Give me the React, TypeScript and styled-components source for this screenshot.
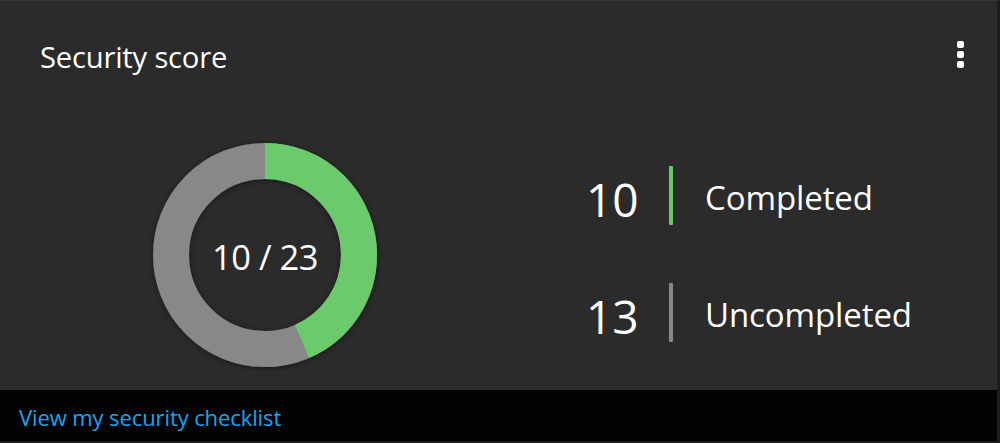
import React from 'react';
import styled, { createGlobalStyle } from 'styled-components';

const GlobalStyle = createGlobalStyle`
  html, body {
    margin: 0;
    padding: 0;
    background: #000;
  }
  body {
    font-family: "Open Sans", "Noto Sans", sans-serif;
    color: #fff;
  }
`;

const Card = styled.div`
  width: 1000px;
  height: 443px;
  display: flex;
  flex-direction: column;
  background: #2b2b2b;
  border-top: 1px solid #363636;
  border-right: 3px solid #1c1c1c;
  box-sizing: border-box;
  overflow: hidden;
`;

const Main = styled.div`
  height: 389px;
  display: flex;
  flex-direction: column;
`;

const Header = styled.div`
  display: flex;
  align-items: center;
  justify-content: space-between;
  padding: 34px 33px 0 40px;
`;

const Title = styled.h2`
  margin: 0;
  font-size: 29.2px;
  font-weight: 400;
  line-height: 44px;
  letter-spacing: -0.2px;
`;

const MenuButton = styled.button`
  display: flex;
  flex-direction: column;
  gap: 3px;
  padding: 0;
  margin-top: -5px;
  border: 0;
  background: none;
  cursor: pointer;
`;

const Dot = styled.span`
  width: 7px;
  height: 7px;
  border-radius: 2px;
  background: #fff;
`;

const Content = styled.div`
  display: flex;
  align-items: flex-start;
  padding: 61px 0 0 150px;
`;

const Donut = styled.div`
  display: grid;
  width: 230px;
  height: 230px;
  & > * {
    grid-area: 1 / 1;
  }
`;

const DonutLabel = styled.div`
  display: flex;
  align-items: center;
  justify-content: center;
  font-size: 34.5px;
  letter-spacing: -0.5px;
  padding-top: 2px;
`;

const Stats = styled.div`
  display: flex;
  flex-direction: column;
  gap: 58px;
  margin-left: 206px;
  margin-top: 26px;
`;

const StatRow = styled.div`
  display: flex;
  align-items: center;
  height: 59px;
`;

const StatValue = styled.span`
  width: 83px;
  font-size: 46px;
  line-height: 1;
  padding-top: 6px;
`;

const StatBar = styled.span<{ $color: string }>`
  width: 4px;
  height: 59px;
  border-radius: 1px;
  background: ${(p) => p.$color};
`;

const StatLabel = styled.span`
  margin-left: 32px;
  font-size: 33px;
  letter-spacing: -0.1px;
  padding-top: 4px;
`;

const Footer = styled.div`
  flex: 1;
  display: flex;
  align-items: center;
  padding: 0 0 0 19px;
  background: #030303;
  border-bottom: 2px solid #1a1a1a;
`;

const Link = styled.a`
  color: #1aa3ef;
  font-size: 22px;
  letter-spacing: -0.1px;
  text-decoration: none;
  cursor: pointer;
  padding-top: 2px;
`;

const completed = 10;
const total = 23;

const Ring = () => {
  const r = 94;
  const c = 2 * Math.PI * r;
  const frac = completed / total;
  return (
    <svg width="230" height="230" viewBox="0 0 230 230">
      <defs>
        <filter id="shadow" x="-20%" y="-20%" width="140%" height="140%">
          <feDropShadow dx="0" dy="1" stdDeviation="3" floodColor="#000" floodOpacity="0.45" />
        </filter>
      </defs>
      <g filter="url(#shadow)">
        <circle cx="115" cy="115" r={r} fill="none" stroke="#888888" strokeWidth="36" />
        <circle
          cx="115"
          cy="115"
          r={r}
          fill="none"
          stroke="#6bca6c"
          strokeWidth="36"
          strokeDasharray={`${c * frac} ${c}`}
          transform="rotate(-90 115 115)"
        />
      </g>
    </svg>
  );
};

const App = () => {
  return (
    <>
      <GlobalStyle />
      <Card>
        <Main>
          <Header>
            <Title>Security score</Title>
            <MenuButton aria-label="More options">
              <Dot />
              <Dot />
              <Dot />
            </MenuButton>
          </Header>
          <Content>
            <Donut>
              <Ring />
              <DonutLabel>
                {completed} / {total}
              </DonutLabel>
            </Donut>
            <Stats>
              <StatRow>
                <StatValue>{completed}</StatValue>
                <StatBar $color="#6bca6c" />
                <StatLabel>Completed</StatLabel>
              </StatRow>
              <StatRow>
                <StatValue>{total - completed}</StatValue>
                <StatBar $color="#888888" />
                <StatLabel>Uncompleted</StatLabel>
              </StatRow>
            </Stats>
          </Content>
        </Main>
        <Footer>
          <Link>View my security checklist</Link>
        </Footer>
      </Card>
    </>
  );
};

export default App;
